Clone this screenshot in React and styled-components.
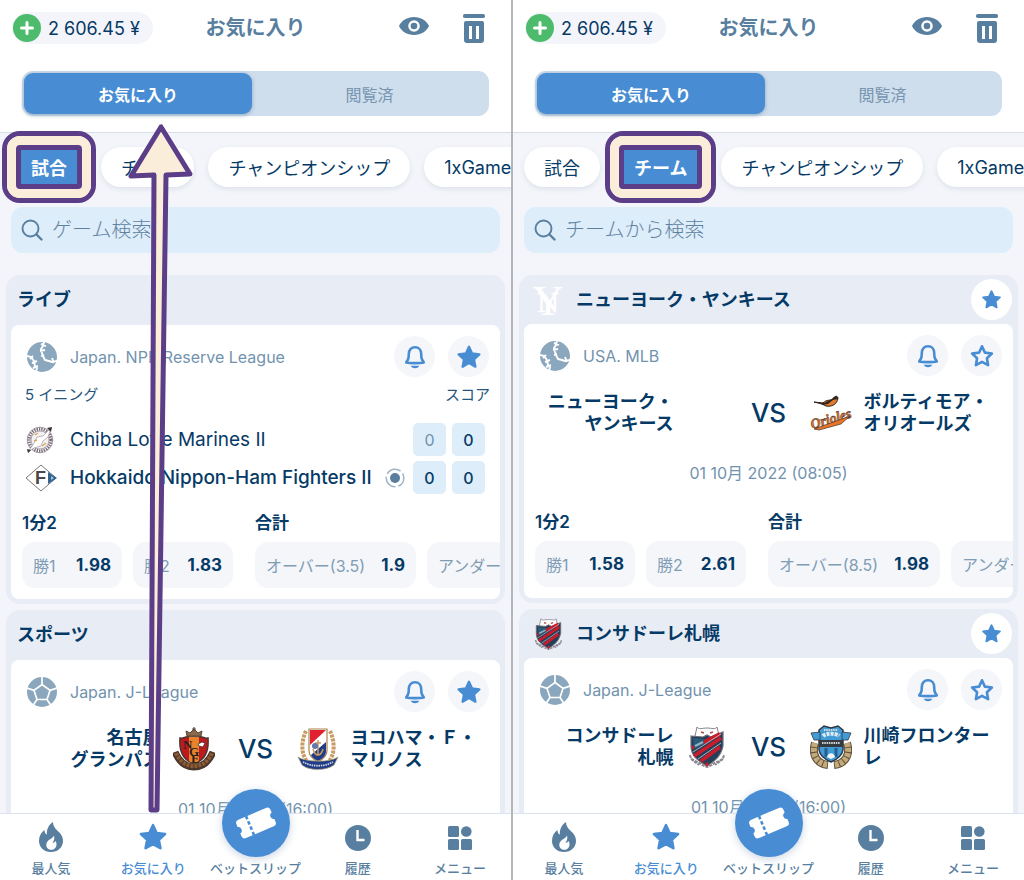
import React from 'react';
import styled, { createGlobalStyle } from 'styled-components';

const GlobalStyle = createGlobalStyle`
  * {
    box-sizing: border-box;
  }
  body {
    margin: 0;
    background: #f3f5fa;
    color: #063a66;
    font-family: 'Inter', 'Noto Sans CJK JP', sans-serif;
    font-size: 16px;
  }
  button {
    border: 0;
    padding: 0;
    background: none;
    color: inherit;
    font: inherit;
    white-space: nowrap;
    cursor: pointer;
  }
  svg {
    display: block;
  }
`;

//page
const Screens = styled.main`
  display: flex;
  gap: 2px;
  height: 100vh;
  background: #b3b6bb;
`;
const Phone = styled.section`
  position: relative;
  display: flex;
  flex: 1;
  flex-direction: column;
  min-width: 0;
  overflow: hidden;
  background: #f3f5fa;
`;

//header
const Header = styled.header`
  padding: 12px 22px 16px;
  border-bottom: 1px solid #d6dee7;
  background: #fff;
`;
const TopBar = styled.div`
  display: grid;
  grid-template-columns: 1fr auto 1fr;
  align-items: center;
  height: 32px;
  margin: 0 -10px 27px;
`;
const Balance = styled.button`
  display: flex;
  align-items: center;
  justify-self: start;
  gap: 7px;
  height: 32px;
  padding: 0 13px 0 1px;
  border-radius: 16px;
  background: #f4f5fa;
  font-size: 18px;
`;
const Title = styled.h1`
  margin: 0;
  color: #587f9f;
  font-size: 20px;
  font-weight: 600;
  line-height: 28px;
`;
const Actions = styled.div`
  display: flex;
  align-items: center;
  justify-self: end;
  gap: 34px;
  padding-right: 14px;
  color: #587f9f;
`;
const Segments = styled.div`
  display: flex;
  height: 45px;
  padding: 2px;
  border-radius: 11px;
  background: #cfdeed;
`;
const Segment = styled.button`
  flex: ${({ $active }) => ($active ? '228 0 0' : '235 0 0')};
  border-radius: 9px;
  background: ${({ $active }) => ($active ? '#488dd3' : 'none')};
  box-shadow: ${({ $active }) => ($active ? '0 1px 4px #8ea6bf' : 'none')};
  color: ${({ $active }) => ($active ? '#fff' : '#7795b0')};
  font-weight: ${({ $active }) => ($active ? 600 : 400)};
`;

//filter tabs
const Tabs = styled.div`
  display: flex;
  flex-shrink: 0;
  gap: 14px;
  padding: 14px 0 20px 11px;
`;
const Tab = styled.button`
  position: relative;
  flex-shrink: 0;
  height: 40px;
  padding: 0 20px;
  border-radius: 20px;
  background: ${({ $active }) => ($active ? '#488dd3' : '#fff')};
  box-shadow: 0 2px 5px #dce1e9;
  color: ${({ $active }) => ($active ? '#fff' : '#063a66')};
  font-size: 18px;
  font-weight: ${({ $active }) => ($active ? 600 : 400)};
`;
const Highlight = styled.span`
  position: absolute;
  inset: -16px -9px;
  border: 5px solid #5c3d87;
  border-radius: 18px;
  pointer-events: none;

  &::before {
    content: '';
    position: absolute;
    inset: 0;
    border: 9px solid #faeeda;
    border-radius: 13px;
  }
  &::after {
    content: '';
    position: absolute;
    inset: 9px;
    border: 5px solid #5c3d87;
    border-radius: 4px;
  }
`;

//search
const SearchBox = styled.label`
  display: flex;
  flex-shrink: 0;
  align-items: center;
  gap: 9px;
  height: 46px;
  margin: 0 11px 22px;
  padding: 0 10px;
  border-radius: 12px;
  background: #ddedfa;
  color: #587f9f;
`;
const SearchInput = styled.input`
  flex: 1;
  min-width: 0;
  border: 0;
  padding: 0;
  outline: 0;
  background: none;
  color: #063a66;
  font-family: inherit;
  font-size: 20px;
  font-weight: 300;

  &::placeholder {
    color: #5f82a1;
    opacity: 1;
  }
`;

//cards
const Feed = styled.div`
  display: flex;
  flex: 1;
  flex-direction: column;
  gap: 6px;
  min-height: 0;
  padding: 0 6px;
  overflow: hidden;
`;
const Group = styled.article`
  flex-shrink: 0;
  padding: 0 5px 5px;
  border-radius: 14px;
  background: #e8ecf5;
`;
const GroupHead = styled.div`
  display: flex;
  align-items: center;
  gap: 12px;
  height: ${({ $logo }) => ($logo ? '49px' : '50px')};
  padding: 0 1px 0 ${({ $logo }) => ($logo ? '9px' : '6px')};
`;
const GroupTitle = styled.h2`
  flex: 1;
  margin: 0;
  font-size: 18px;
  font-weight: 600;
  line-height: 24px;
`;
const Card = styled.div`
  padding: 11px 0;
  border-radius: 8px;
  background: #fff;
  overflow: hidden;
`;
const League = styled.div`
  display: flex;
  align-items: center;
  gap: 13px;
  padding: 0 11px 0 16px;
`;
const LeagueName = styled.span`
  flex: 1;
  color: #7293ae;
  font-size: 16px;
`;
const RoundButton = styled.button`
  display: flex;
  align-items: center;
  justify-content: center;
  width: 41px;
  height: 41px;
  border-radius: 50%;
  background: ${({ $white }) => ($white ? '#fff' : '#f4f6fa')};
  color: #488dd3;
`;

//live match
const Meta = styled.div`
  display: flex;
  justify-content: space-between;
  padding: 8px 10px 0 14px;
  color: #28557d;
  font-size: 15px;
  line-height: 20px;
`;
const ScoreTable = styled.table`
  width: 100%;
  margin-top: 13px;
  padding: 0 9px 0 8px;
  border-spacing: 6px 5px;
`;
const TeamCell = styled.th`
  padding: 0;
  font-size: 19px;
  font-weight: ${({ $active }) => ($active ? 500 : 400)};
  text-align: left;
`;
const TeamLine = styled.div`
  display: flex;
  align-items: center;
  gap: 13px;
  white-space: nowrap;
`;
const Score = styled.td`
  width: 33px;
  height: 33px;
  padding: 0;
  border-radius: 5px;
  background: #ddedfa;
  color: ${({ $dim }) => ($dim ? '#7293ae' : '#063a66')};
  font-weight: ${({ $dim }) => ($dim ? 400 : 500)};
  text-align: center;
`;

//upcoming match
const Versus = styled.div`
  display: grid;
  grid-template-columns: 1fr 42px 82px 42px 1fr;
  align-items: center;
  margin-top: 15px;
  font-size: 18px;
  font-weight: 600;
  line-height: 22px;
`;
const TeamName = styled.div`
  padding: 0 12px;
  text-align: ${({ $side }) => $side};
  white-space: pre-line;
`;
const VsLabel = styled.div`
  font-size: 26px;
  font-weight: 500;
  text-align: center;
`;
const MatchDate = styled.div`
  margin: 28px 0;
  color: #7293ae;
  font-size: 16px;
  line-height: 20px;
  text-align: center;
`;

//odds
const OddsRow = styled.div`
  display: flex;
  gap: 22px;
  margin-top: ${({ $live }) => ($live ? '13px' : '0')};
  padding-left: 11px;
`;
const Market = styled.div`
  flex-shrink: 0;
`;
const MarketName = styled.h3`
  margin: 0 0 8px;
  font-size: 17px;
  font-weight: 600;
  line-height: 22px;
`;
const Choices = styled.div`
  display: flex;
  gap: 11px;
`;
const Odd = styled.button`
  display: flex;
  align-items: center;
  justify-content: space-between;
  gap: 16px;
  min-width: 100px;
  height: 46px;
  padding: 0 11px;
  border-radius: 13px;
  background: #f4f6fa;
  color: #7f9db5;
`;
const Rate = styled.strong`
  color: #063a66;
  font-size: 17px;
  font-weight: 700;
`;

//bottom bar
const BottomNav = styled.nav`
  display: flex;
  flex-shrink: 0;
  height: 67px;
  border-top: 1px solid #dde3ee;
  background: #fff;
`;
const NavItem = styled.a`
  position: relative;
  display: flex;
  flex: 1;
  flex-direction: column;
  align-items: center;
  justify-content: flex-end;
  gap: 7px;
  min-width: 0;
  padding-bottom: 3px;
  color: ${({ $active }) => ($active ? '#488dd3' : '#587f9f')};
  font-size: 13px;
  font-weight: 500;
  line-height: 18px;
  text-decoration: none;
  white-space: nowrap;
`;
const SlipCircle = styled.span`
  position: absolute;
  bottom: 23px;
  display: flex;
  align-items: center;
  justify-content: center;
  width: 68px;
  height: 68px;
  border-radius: 50%;
  background: #488dd3;
  box-shadow: 0 2px 8px #cbd6e3;
`;

const PointerArrow = styled.svg`
  position: absolute;
  top: 0;
  left: 0;
  pointer-events: none;
`;

//icons
const PlusIcon = () => (
  <svg width="28" height="28" viewBox="0 0 28 28">
    <circle cx="14" cy="14" r="14" fill="#4cbb6b" />
    <path d="M14 8.500v11M8.500 14h11" stroke="#fff" strokeWidth="3" strokeLinecap="round" />
  </svg>
);

const EyeIcon = () => (
  <svg width="30" height="22" viewBox="0 0 30 22">
    <path
      fill="currentColor"
      fillRule="evenodd"
      d="M15 0C8 0 2.400 3.800 0 9c2.400 5.200 8 9 15 9s12.600-3.800 15-9C27.600 3.800 22 0 15 0Zm0 3.200a5.800 5.800 0 1 1 0 11.600a5.800 5.800 0 0 1 0-11.600Z"
    />
    <circle cx="15" cy="9" r="3.300" fill="currentColor" />
  </svg>
);

const TrashIcon = () => (
  <svg width="22" height="30" viewBox="0 0 22 30">
    <rect y="1" width="22" height="4" rx="1.800" fill="currentColor" />
    <path
      fill="currentColor"
      fillRule="evenodd"
      d="M3 8h16a2 2 0 0 1 2 2v17a3 3 0 0 1-3 3H4a3 3 0 0 1-3-3V10a2 2 0 0 1 2-2ZM6 13v13h3V13Zm7 0v13h3V13Z"
    />
  </svg>
);

const SearchIcon = () => (
  <svg width="22" height="22" viewBox="0 0 22 22" fill="none" stroke="currentColor">
    <circle cx="9.500" cy="9.500" r="8" strokeWidth="1.900" />
    <path d="m15.500 15.500 5 5" strokeWidth="2.400" strokeLinecap="round" />
  </svg>
);

const BellIcon = () => (
  <svg width="22" height="24" viewBox="0 0 22 24">
    <path
      d="M4 14.500c.7-1.300.8-2.300.8-5.500C4.800 4.800 7.300 2.300 11 2.300s6.200 2.500 6.200 6.700c0 3.200.1 4.200.8 5.500l1.800 3c-3.500.8-14.100.8-17.600 0Z"
      fill="none"
      stroke="currentColor"
      strokeWidth="2.600"
      strokeLinejoin="round"
    />
    <path d="M6.800 20.800h8.400c-.5 1.500-1.800 2.400-4.200 2.400s-3.700-.9-4.200-2.400Z" fill="currentColor" />
  </svg>
);

const StarIcon = ({ size = 26, hollow }) => (
  <svg width={size} height={size} viewBox="0 0 26 26">
    <path
      d={
        hollow
          ? 'm13 3.300 2.900 6.300 7 .9-5 4.800 1.200 6.900-6.100-3.300-6.100 3.300 1.200-6.900-5-4.800 7-.9Z'
          : 'm13 2.800 3.100 6.700 7.300.9-5.400 5 1.400 7.300-6.400-3.600-6.400 3.600L8 15.400l-5.400-5 7.300-.9Z'
      }
      fill={hollow ? 'none' : 'currentColor'}
      stroke="currentColor"
      strokeWidth={hollow ? 2.6 : 2.300}
      strokeLinejoin="round"
    />
  </svg>
);

const BaseballIcon = () => (
  <svg width="30" height="30" viewBox="0 0 30 30">
    <circle cx="15" cy="15" r="15" fill="#8ba7be" />
    <g fill="none" stroke="#fff" strokeWidth="1.900" strokeLinejoin="round">
      <path d="m17 0-1 4-2 3 1 4 1 3 2 4 4 1 3 1 5-1M14 2l5 2M13 9l5-1M14 14l3-1M25 16l2 5" />
      <path d="m0 14 4 1 3 4 1 5 2 2-1 4M3 17l3-3M5 21l5-2M6 26l5-2" />
    </g>
  </svg>
);

const FootballIcon = () => (
  <svg width="30" height="30" viewBox="0 0 30 30">
    <circle cx="15" cy="15" r="15" fill="#8ba7be" />
    <g fill="none" stroke="#fff" strokeWidth="1.700">
      <path d="m15 7.500 8 5.900-3 9.100H10l-3-9.100Z" />
      <path d="M15 7.500V0M23 13.400l7-2.400M20 22.500l4 6M10 22.500l-4 6M7 13.400 0 11" />
    </g>
  </svg>
);

const ServeIcon = () => (
  <svg width="20" height="20" viewBox="0 0 20 20">
    <circle cx="10" cy="10" r="5" fill="#587f9f" />
    <circle cx="10" cy="10" r="8.800" fill="none" stroke="#9db3c6" strokeWidth="1.500" strokeDasharray="15.400 3" strokeDashoffset="5" />
  </svg>
);

const FlameIcon = () => (
  <svg width="24" height="30" viewBox="0 0 24 30">
    <path
      fill="currentColor"
      fillRule="evenodd"
      d="M14 0c0 4 2 6.200 4 8.300C21.500 11.600 24 14 24 19c0 6.200-5 11-12 11S0 25.200 0 19c0-4.800 2.200-8.600 5.500-11 0 2.500.8 4 2.400 4.500C7.500 7 10 2.500 14 0Zm1 13.500c-1.400 3.500-7.700 4.300-7.700 9.200 0 3.200 2.200 5 5 5s5.200-2.200 5.200-5.300c0-1.400-.4-2.400-1-3.400-1 1.500-2 1.900-3 1.900 1.800-2.400 2.200-4.800 1.500-7.400Z"
    />
  </svg>
);

const TicketIcon = () => (
  <svg width="44" height="36" viewBox="0 0 44 36">
    <g transform="rotate(-23 22 18)">
      <path
        fill="#fff"
        d="M7 8h30a3.500 3.500 0 0 1 3.500 3.500v3a3.600 3.600 0 0 0 0 7v3A3.500 3.500 0 0 1 37 28H7a3.500 3.500 0 0 1-3.500-3.500v-3a3.600 3.600 0 0 0 0-7v-3A3.500 3.500 0 0 1 7 8Z"
      />
      <path d="M15.500 7.500v21" stroke="#488dd3" strokeWidth="2.600" strokeDasharray="3.600 2.200" />
    </g>
  </svg>
);

const ClockIcon = () => (
  <svg width="26" height="28" viewBox="0 0 26 28">
    <circle cx="13" cy="14" r="13" fill="currentColor" />
    <path d="M12.500 6v10h7" fill="none" stroke="#fff" strokeWidth="2.400" />
  </svg>
);

const MenuIcon = () => (
  <svg width="24" height="28" viewBox="0 0 24 28" fill="currentColor">
    <rect y="2" width="11" height="11" rx="1.500" />
    <circle cx="18.300" cy="7.500" r="5.300" />
    <rect y="15" width="11" height="11" rx="1.500" />
    <rect x="13" y="15" width="11" height="11" rx="1.500" />
  </svg>
);

//team logos
const MarinesLogo = () => (
  <svg width="32" height="30" viewBox="0 0 32 30">
    <circle cx="15" cy="15" r="11" fill="none" stroke="#7d6f7a" strokeWidth="3.500" strokeDasharray="1.400 1" />
    <circle cx="15" cy="15" r="12.800" fill="none" stroke="#8e8590" strokeWidth=".7" />
    <circle cx="15" cy="15" r="9" fill="#f4f1f2" stroke="#8e8590" strokeWidth=".7" />
    <path d="m3 27 6-9 3-6 6-1 8-8-3 9-5 4-2 5-7 2Z" fill="#fff" stroke="#a69b9e" strokeWidth=".7" />
    <path d="m22 3 5-1-1 5ZM2 24l4 1-3 3Z" fill="#382e38" />
    <path d="m10 10 3-2m4 13 4-3m-12-2 3-1" stroke="#dca95c" strokeWidth="1.500" />
  </svg>
);

const FightersLogo = () => (
  <svg width="32" height="28" viewBox="0 0 32 28">
    <path d="m16 1 15 13-15 13L1 14Z" fill="#fff" stroke="#77747c" strokeWidth="1" />
    <path d="m23 8 9 6-9 6Z" fill="#30648e" />
    <path d="m26 12 3 2-3 2Z" fill="#a9c4d8" />
    <text x="10" y="20" fill="#4b4847" fontFamily="Liberation Sans" fontSize="18" fontWeight="700">F</text>
  </svg>
);

const GrampusLogo = () => (
  <svg width="42" height="44" viewBox="0 0 42 44">
    <path d="m14 9-1-5 4 2 4-4 4 4 4-2-1 5Z" fill="#8b6a4c" stroke="#59463a" />
    <path d="M21 0v4M19 2h4" stroke="#59463a" strokeWidth="1.200" />
    <path d="M7 11c4 1 5-2 9-1h10c4-1 5 2 9 1 1 14-3 22-14 26C10 33 6 25 7 11Z" fill="#bd1a20" stroke="#49372d" strokeWidth="1.500" />
    <path d="M16 10h10v24l-5 3-5-3Z" fill="#e7832a" />
    <path d="M2 25c5 12 13 15 19 15s14-3 19-15" fill="none" stroke="#49372d" strokeWidth="7" />
    <path d="M3 26c5 11 12 13 18 13s13-2 18-13" fill="none" stroke="#8e5a32" strokeWidth="4" strokeDasharray="3 1" />
    <g fill="#2a211d" fontFamily="Liberation Serif" fontSize="13" fontWeight="700">
      <text x="10" y="22">N</text>
      <text x="16" y="29">G</text>
      <text x="18" y="36">E</text>
    </g>
    <path d="m25 17 4-2 3 1-2 4-4-1Z" fill="#fff" stroke="#2a211d" strokeWidth=".7" />
  </svg>
);

const MarinosLogo = () => (
  <svg width="42" height="44" viewBox="0 0 42 44">
    <path d="M9 4C5 12 3 26 10 34M33 4c4 8 6 22-1 30" fill="none" stroke="#c99b62" strokeWidth="4" strokeDasharray="3 1" />
    <path d="M12 2h18v22c0 5-4 8-9 11-5-3-9-6-9-11Z" fill="#fff" stroke="#a9814d" strokeWidth="1.200" />
    <path d="M13 3h16L13 18Z" fill="#e12131" />
    <path d="M29 15v9c0 5-3 7-8 10-4-2-6-4-7-6Z" fill="#203c84" />
    <path d="M21 13v15m-5-6c1 4 3 6 5 6s4-2 5-6m-8-6h6" fill="none" stroke="#c99b62" strokeWidth="1.500" />
    <circle cx="18" cy="19" r="3" fill="#6178ad" />
    <path d="M1 30c7 5 32 6 40 0l-4 8c-8 6-25 6-32 0Z" fill="#203c84" stroke="#b5a27a" strokeWidth=".7" />
    <path d="M6 35c9 5 21 5 30 0" fill="none" stroke="#cbd3e4" strokeWidth="1.800" strokeDasharray="1.500 .8" />
  </svg>
);

const YankeesLogo = () => (
  <svg width="31" height="34" viewBox="0 0 31 34" fill="#fff" stroke="#fff" fontFamily="Liberation Serif" textAnchor="middle">
    <text x="15" y="29" fontSize="30" strokeWidth=".6">N</text>
    <text x="15" y="32" fontSize="43" strokeWidth="0">Y</text>
  </svg>
);

const OriolesLogo = () => (
  <svg width="44" height="36" viewBox="0 0 44 36">
    <path d="m4 7 9 1c4-4 7-2 10-4 2-3 4-4 5-1-1 7-7 9-12 8l-4-2Z" fill="#e77b2c" stroke="#2b211d" strokeWidth="1" />
    <path d="m4 7 10 1 8-4c3-4 6-3 6 0l-5 1-5 4-6 1-1-2-7-1Z" fill="#30251f" />
    <g transform="rotate(-16 22 24)">
      <text
        x="21"
        y="28"
        fill="#e6752a"
        stroke="#49301f"
        strokeWidth=".5"
        fontFamily="Liberation Serif"
        fontSize="14"
        fontStyle="italic"
        fontWeight="700"
        textAnchor="middle"
      >
        Orioles
      </text>
    </g>
    <path d="m4 34 36-13-9 8-22 6Z" fill="#e6752a" stroke="#49301f" strokeWidth=".7" />
  </svg>
);

const ConsadoleLogo = ({ width = 36, height = 42 }) => (
  <svg width={width} height={height} viewBox="0 0 36 42">
    <path d="M8 1c2 3 5 1 10 1s8 2 10-1l2 9-5 5H11L6 10Z" fill="#fff" stroke="#86808a" strokeWidth="1" />
    <path d="m12 6 3 1m6 0 3-1" stroke="#b14b3c" strokeWidth="1.600" />
    <path d="m2 10 12 1 4-2 4 2 12-5v14c-2 10-8 15-16 20C9 35 2 30 2 20Z" fill="#233f59" stroke="#706d75" strokeWidth="1.200" />
    <path d="M5 30 32 12M3 22l28-14M12 35l19-14" stroke="#c81c2c" strokeWidth="3.800" />
    <path d="M4 26 32 8M9 33l23-16" stroke="#e7e3e3" strokeWidth=".7" />
    <path d="m4 12 11 1-1 6-9 4Z" fill="#285c79" />
    <path d="m6 20 8-4" stroke="#8fb4c8" strokeWidth="2" />
    <path d="M1 29c1 7 9 6 12 10l5 2 5-2c3-4 11-3 12-10M2 33l8 6m24-6-8 6" fill="none" stroke="#8b8790" strokeWidth="2" strokeDasharray="3 1" />
    <path d="m16 38 2-2 2 2-2 3Z" fill="#c81c2c" />
  </svg>
);

const FrontaleLogo = () => (
  <svg width="42" height="44" viewBox="0 0 42 44">
    <path d="M5 18c-4 13 3 21 13 22M37 18c4 13-3 21-13 22" fill="none" stroke="#5d503d" strokeWidth="8" />
    <path d="M5 18c-4 13 3 21 13 22M37 18c4 13-3 21-13 22" fill="none" stroke="#c4a979" strokeWidth="6" strokeDasharray="4 1" />
    <path d="m9 5 5-4 7 2 7-2 5 4v20c-1 6-5 9-12 12C14 34 10 31 9 25Z" fill="#439bd6" stroke="#2e3740" strokeWidth="1.500" />
    <path d="m1 8 9-1v8H4ZM41 8l-9-1v8h6Z" fill="#439bd6" stroke="#2e3740" strokeWidth=".8" />
    <path d="M9 15h24v7H9Z" fill="#343a40" />
    <path d="M13 11c3-3 13-3 16 0" fill="none" stroke="#dceaf3" strokeWidth="4" strokeDasharray="3 1" />
    <path d="M14 5h14M12 18h18" stroke="#d2d8da" strokeWidth="1.800" strokeDasharray="1.500 .8" />
    <path d="M16 23v9m10-9v9" stroke="#255e92" strokeWidth="3" />
    <path d="M17 32c1-5 7-5 8 0l-4 2Z" fill="#f1f5f7" />
  </svg>
);

const HeadStar = () => (
  <RoundButton $white aria-label="お気に入り">
    <StarIcon size={21} />
  </RoundButton>
);

const LeagueHeader = ({ icon, name, hollow }) => (
  <League>
    {icon}
    <LeagueName>{name}</LeagueName>
    <RoundButton aria-label="通知">
      <BellIcon />
    </RoundButton>
    <RoundButton aria-label="お気に入り">
      <StarIcon hollow={hollow} />
    </RoundButton>
  </League>
);

const Odds = ({ markets, live }) => (
  <OddsRow $live={live}>
    {markets.map(market => (
      <Market key={market.name}>
        <MarketName>{market.name}</MarketName>
        <Choices>
          {market.choices.map(([label, rate]) => (
            <Odd key={label}>
              {label} <Rate>{rate}</Rate>
            </Odd>
          ))}
        </Choices>
      </Market>
    ))}
  </OddsRow>
);

const LiveMatch = () => (
  <Card>
    <LeagueHeader icon={<BaseballIcon />} name="Japan. NPB Reserve League" />
    <Meta>
      <span>5 イニング</span>
      <span>スコア</span>
    </Meta>
    <ScoreTable>
      <tbody>
        <tr>
          <TeamCell scope="row">
            <TeamLine>
              <MarinesLogo />
              Chiba Lotte Marines II
            </TeamLine>
          </TeamCell>
          <Score $dim>0</Score>
          <Score>0</Score>
        </tr>
        <tr>
          <TeamCell scope="row" $active>
            <TeamLine>
              <FightersLogo />
              Hokkaido Nippon-Ham Fighters II
              <ServeIcon />
            </TeamLine>
          </TeamCell>
          <Score>0</Score>
          <Score>0</Score>
        </tr>
      </tbody>
    </ScoreTable>
    <Odds
      live
      markets={[
        { name: '1分2', choices: [['勝1', '1.98'], ['勝2', '1.83']] },
        { name: '合計', choices: [['オーバー(3.5)', '1.9'], ['アンダー(3.5)', '1.9']] },
      ]}
    />
  </Card>
);

const Match = ({ icon, league, hollow, home, away, homeLogo, awayLogo, date, over, total }) => (
  <Card>
    <LeagueHeader icon={icon} name={league} hollow={hollow} />
    <Versus>
      <TeamName $side="right">{home}</TeamName>
      {homeLogo}
      <VsLabel>VS</VsLabel>
      {awayLogo}
      <TeamName $side="left">{away}</TeamName>
    </Versus>
    <MatchDate>{date}</MatchDate>
    {over && (
      <Odds
        markets={[
          { name: '1分2', choices: [['勝1', '1.58'], ['勝2', '2.61']] },
          { name: '合計', choices: [[`オーバー(${total})`, over], [`アンダー(${total})`, '1.8']] },
        ]}
      />
    )}
  </Card>
);

const PhoneScreen = ({ active, placeholder, children }) => (
  <Phone>
    <Header>
      <TopBar>
        <Balance>
          <PlusIcon />2 606.45 ¥
        </Balance>
        <Title>お気に入り</Title>
        <Actions>
          <button aria-label="表示">
            <EyeIcon />
          </button>
          <button aria-label="削除">
            <TrashIcon />
          </button>
        </Actions>
      </TopBar>
      <Segments>
        <Segment $active>お気に入り</Segment>
        <Segment>閲覧済</Segment>
      </Segments>
    </Header>
    <Tabs>
      {['試合', 'チーム', 'チャンピオンシップ', '1xGames'].map(name => (
        <Tab key={name} $active={name === active}>
          {name}
          {name === active && <Highlight />}
        </Tab>
      ))}
    </Tabs>
    <SearchBox>
      <SearchIcon />
      <SearchInput type="text" placeholder={placeholder} aria-label={placeholder} />
    </SearchBox>
    <Feed>{children}</Feed>
    <BottomNav>
      <NavItem href="#popular">
        <FlameIcon />
        最人気
      </NavItem>
      <NavItem href="#favorites" $active>
        <StarIcon size={30} />
        お気に入り
      </NavItem>
      <NavItem href="#slip">
        <SlipCircle>
          <TicketIcon />
        </SlipCircle>
        ベットスリップ
      </NavItem>
      <NavItem href="#history">
        <ClockIcon />
        履歴
      </NavItem>
      <NavItem href="#menu">
        <MenuIcon />
        メニュー
      </NavItem>
    </BottomNav>
  </Phone>
);

const App = () => {
  return (
    <>
      <GlobalStyle />
      <Screens>
        <Phone as="div">
          <PhoneScreen active="試合" placeholder="ゲーム検索">
            <Group>
              <GroupHead>
                <GroupTitle>ライブ</GroupTitle>
              </GroupHead>
              <LiveMatch />
            </Group>
            <Group>
              <GroupHead>
                <GroupTitle>スポーツ</GroupTitle>
              </GroupHead>
              <Match
                icon={<FootballIcon />}
                league="Japan. J-League"
                home={'名古屋\nグランパス'}
                away={'ヨコハマ・Ｆ・\nマリノス'}
                homeLogo={<GrampusLogo />}
                awayLogo={<MarinosLogo />}
                date="01 10月 2022 (16:00)"
              />
            </Group>
          </PhoneScreen>
          <PointerArrow width="200" height="820" viewBox="0 0 200 820">
            <path
              d="M161 127 131 176l23-1-3 635h6l9-635 24-1Z"
              fill="#faeeda"
              stroke="#5c3d87"
              strokeWidth="5"
              strokeLinejoin="round"
            />
          </PointerArrow>
        </Phone>
        <PhoneScreen active="チーム" placeholder="チームから検索">
          <Group>
            <GroupHead $logo>
              <YankeesLogo />
              <GroupTitle>ニューヨーク・ヤンキース</GroupTitle>
              <HeadStar />
            </GroupHead>
            <Match
              hollow
              icon={<BaseballIcon />}
              league="USA. MLB"
              home={'ニューヨーク・\nヤンキース'}
              away={'ボルティモア・\nオリオールズ'}
              homeLogo={<span />}
              awayLogo={<OriolesLogo />}
              date="01 10月 2022 (08:05)"
              over="1.98"
              total="8.5"
            />
          </Group>
          <Group>
            <GroupHead $logo>
              <ConsadoleLogo width={31} height={32} />
              <GroupTitle>コンサドーレ札幌</GroupTitle>
              <HeadStar />
            </GroupHead>
            <Match
              hollow
              icon={<FootballIcon />}
              league="Japan. J-League"
              home={'コンサドーレ\n札幌'}
              away={'川崎フロンター\nレ'}
              homeLogo={<ConsadoleLogo width={42} height={42} />}
              awayLogo={<FrontaleLogo />}
              date="01 10月 2022 (16:00)"
            />
          </Group>
        </PhoneScreen>
      </Screens>
    </>
  );
};

export default App;
